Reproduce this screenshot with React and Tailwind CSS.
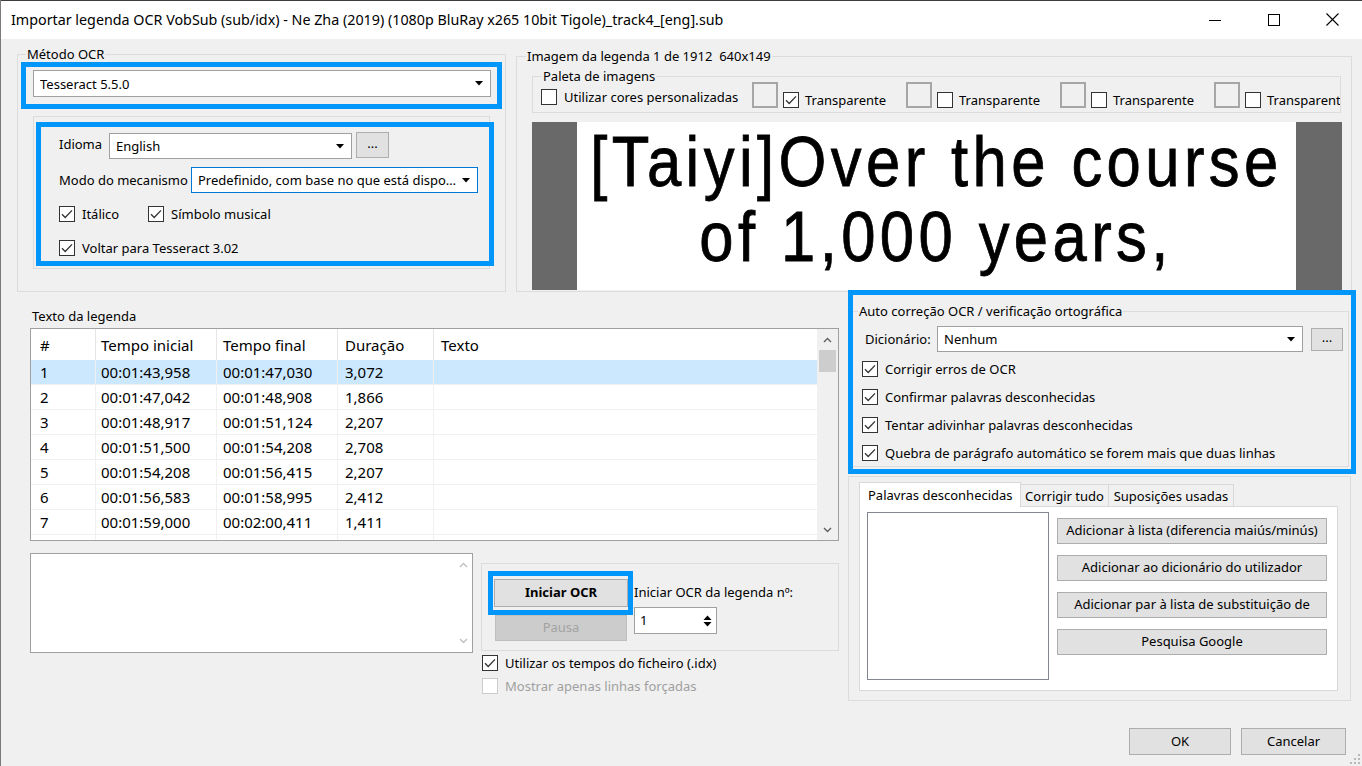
import React from "react";

const UI = "font-['Noto_Sans',sans-serif]";

function Check({ checked, disabled }) {
  return (
    <span
      className={`w-[16px] h-[16px] shrink-0 bg-white border flex items-center justify-center ${
        disabled ? "border-[#cccccc]" : "border-[#333333]"
      }`}
    >
      {checked && (
        <svg width="14" height="14" viewBox="0 0 14 14">
          <path d="M2 7.3 L5.2 10.5 L12 3.4" fill="none" stroke="#333333" strokeWidth="1.3" />
        </svg>
      )}
    </span>
  );
}

function CheckRow({ checked, disabled, label, className = "" }) {
  return (
    <div className={`flex items-center h-[16px] ${className}`}>
      <Check checked={checked} disabled={disabled} />
      <span className={`ml-[7px] text-[13px] leading-[16px] whitespace-nowrap ${disabled ? "text-[#a0a0a0]" : ""}`}>
        {label}
      </span>
    </div>
  );
}

function Arrow() {
  return (
    <svg width="8" height="5" viewBox="0 0 8 5" className="shrink-0">
      <path d="M0 0H8L4 4.5Z" fill="#000" />
    </svg>
  );
}

function Combo({ text, className = "", focus }) {
  return (
    <div
      className={`bg-white border flex items-center pl-[6px] pr-[7px] shrink-0 ${
        focus ? "border-[#0078d7]" : "border-[#a0a0a0]"
      } ${className}`}
    >
      <span className="flex-1 whitespace-nowrap overflow-hidden text-[13px] leading-[16px]">{text}</span>
      <Arrow />
    </div>
  );
}

function DotsBtn({ className = "" }) {
  return (
    <div
      className={`bg-[#e1e1e1] border border-[#adadad] flex items-center justify-center text-[13px] leading-[10px] pb-[4px] shrink-0 ${className}`}
    >
      ...
    </div>
  );
}

function Btn({ children, className = "" }) {
  return (
    <div
      className={`bg-[#e1e1e1] border border-[#adadad] flex items-center justify-center text-[13px] whitespace-nowrap shrink-0 ${className}`}
    >
      {children}
    </div>
  );
}

function Group({ label, className = "", labelLeft = "left-[8px]", children }) {
  return (
    <div className={`relative border border-[#dcdcdc] shrink-0 ${className}`}>
      {label && (
        <span
          className={`absolute top-[-9px] px-[1px] bg-[#f0f0f0] text-[13px] leading-[16px] whitespace-pre ${labelLeft}`}
        >
          {label}
        </span>
      )}
      {children}
    </div>
  );
}

function Chevron({ up, color = "#606060" }) {
  return (
    <svg width="9" height="6" viewBox="0 0 9 6">
      <path d={up ? "M1 5 L4.5 1.5 L8 5" : "M1 1 L4.5 4.5 L8 1"} fill="none" stroke={color} strokeWidth="1.4" />
    </svg>
  );
}

const rows = [
  ["1", "00:01:43,958", "00:01:47,030", "3,072"],
  ["2", "00:01:47,042", "00:01:48,908", "1,866"],
  ["3", "00:01:48,917", "00:01:51,124", "2,207"],
  ["4", "00:01:51,500", "00:01:54,208", "2,708"],
  ["5", "00:01:54,208", "00:01:56,415", "2,207"],
  ["6", "00:01:56,583", "00:01:58,995", "2,412"],
  ["7", "00:01:59,000", "00:02:00,411", "1,411"],
  ["", "", "", ""],
];

function ListView() {
  return (
    <div className="ml-[30px] mt-[4px] w-[809px] h-[213px] border border-[#a0a0a0] bg-white flex overflow-hidden shrink-0">
      <div className="flex-1 flex flex-col overflow-hidden">
        <div className="h-[31px] flex shrink-0 text-[15px] leading-[18px]">
          <div className="w-[65px] border-r border-[#e5e5e5] flex items-center pl-[9px]">#</div>
          <div className="w-[121px] border-r border-[#e5e5e5] flex items-center pl-[5px]">Tempo inicial</div>
          <div className="w-[121px] border-r border-[#e5e5e5] flex items-center pl-[6px]">Tempo final</div>
          <div className="w-[96px] border-r border-[#e5e5e5] flex items-center pl-[7px]">Duração</div>
          <div className="flex-1 flex items-center pl-[7px]">Texto</div>
        </div>
        {rows.map((r, i) => (
          <div
            key={i}
            className={`h-[25px] flex shrink-0 border-b border-[#f0f0f0] text-[15px] leading-[18px] ${
              i === 0 ? "bg-[#cce8ff]" : ""
            }`}
          >
            <div className="w-[65px] border-r border-[#f0f0f0] flex items-center pl-[9px]">{r[0]}</div>
            <div className="w-[121px] border-r border-[#f0f0f0] flex items-center pl-[5px]">{r[1]}</div>
            <div className="w-[121px] border-r border-[#f0f0f0] flex items-center pl-[6px]">{r[2]}</div>
            <div className="w-[96px] border-r border-[#f0f0f0] flex items-center pl-[7px]">{r[3]}</div>
            <div className="flex-1"></div>
          </div>
        ))}
      </div>
      <div className="w-[21px] bg-[#f0f0f0] flex flex-col shrink-0">
        <div className="h-[21px] flex items-center justify-center">
          <Chevron up />
        </div>
        <div className="mx-[2px] h-[22px] bg-[#cdcdcd]"></div>
        <div className="flex-1"></div>
        <div className="h-[21px] flex items-center justify-center">
          <Chevron />
        </div>
      </div>
    </div>
  );
}

function PaletteUnit({ checked, label = "Transparente" }) {
  return (
    <div className="w-[154px] shrink-0 flex items-start">
      <div className="mt-[5px] w-[26px] h-[26px] border-2 border-[#a6a6a6] shrink-0"></div>
      <div className="ml-[5px] mt-[15px] flex items-center">
        <Check checked={checked} />
        <span className="ml-[6px] text-[13px] leading-[16px] whitespace-nowrap">{label}</span>
      </div>
    </div>
  );
}

export default function App() {
  return (
    <div className={`relative w-[1362px] h-[766px] bg-[#f0f0f0] overflow-hidden text-black ${UI}`}>
      {/* Title bar */}
      <div className="h-[39px] bg-white flex items-center shrink-0">
        <span className="ml-[11px] text-[14.3px] leading-[18px] whitespace-nowrap">
          Importar legenda OCR VobSub (sub/idx) - Ne Zha (2019) (1080p BluRay x265 10bit Tigole)_track4_[eng].sub
        </span>
        <div className="ml-auto flex h-full">
          <div className="w-[59px] h-full flex items-center justify-center">
            <svg width="12" height="12" viewBox="0 0 12 12">
              <path d="M0 6.5H12" stroke="#000" strokeWidth="1" />
            </svg>
          </div>
          <div className="w-[59px] h-full flex items-center justify-center">
            <svg width="12" height="12" viewBox="0 0 12 12">
              <rect x="0.5" y="0.5" width="11" height="11" fill="none" stroke="#000" strokeWidth="1" />
            </svg>
          </div>
          <div className="w-[59px] h-full flex items-center justify-center">
            <svg width="13" height="13" viewBox="0 0 13 13">
              <path d="M0.5 0.5L12.5 12.5M12.5 0.5L0.5 12.5" stroke="#000" strokeWidth="1.1" />
            </svg>
          </div>
        </div>
      </div>

      {/* Row 1 */}
      <div className="flex h-[253px]">
        <Group label="Método OCR" className="ml-[17px] mt-[15px] w-[489px] h-[238px] flex flex-col">
          <Combo text="Tesseract 5.5.0" className="ml-[15px] mt-[15px] w-[458px] h-[27px]" />
          <Group className="ml-[15px] mt-[19px] w-[457px] h-[153px] flex flex-col">
            <div className="flex items-center mt-[15px] h-[26px]">
              <span className="ml-[25px] w-[50px] text-[13px] leading-[16px] -mt-[2px]">Idioma</span>
              <Combo text="English" className="w-[243px] h-[26px] mt-[2px]" />
              <DotsBtn className="ml-[4px] w-[33px] h-[26px]" />
            </div>
            <div className="flex items-center mt-[9px] h-[26px]">
              <span className="ml-[25px] w-[132px] text-[13px] leading-[16px] whitespace-nowrap">Modo do mecanismo</span>
              <Combo focus text="Predefinido, com base no que está dispo…" className="w-[287px] h-[26px]" />
            </div>
            <div className="flex items-center mt-[13px]">
              <div className="ml-[25px] w-[89px]">
                <CheckRow checked label="Itálico" />
              </div>
              <CheckRow checked label="Símbolo musical" />
            </div>
            <CheckRow checked label="Voltar para Tesseract 3.02" className="ml-[25px] mt-[18px]" />
          </Group>
        </Group>

        <Group
          label="Imagem da legenda 1 de 1912  640x149"
          labelLeft="left-[9px]"
          className="ml-[10px] mt-[17px] w-[836px] h-[236px] flex flex-col"
        >
          <Group label="Paleta de imagens" labelLeft="left-[9px]" className="ml-[15px] mt-[19px] w-[809px] h-[37px]">
            <div className="flex h-full overflow-hidden">
              <div className="w-[219px] shrink-0 flex items-start">
                <div className="ml-[8px] mt-[12px]">
                  <CheckRow label="Utilizar cores personalizadas" />
                </div>
              </div>
              <PaletteUnit checked />
              <PaletteUnit />
              <PaletteUnit />
              <PaletteUnit label="Transparent" />
            </div>
          </Group>
          <div className="ml-[15px] mt-[9px] w-[810px] h-[168px] flex shrink-0">
            <div className="w-[45px] bg-[#696969]"></div>
            <div className="flex-1 bg-white flex flex-col items-center pt-[3px] overflow-hidden font-['Liberation_Sans',Arial,sans-serif] text-[70px] leading-[75px] tracking-[5px] whitespace-nowrap [-webkit-text-stroke:0.8px_#000]">
              <span className="scale-x-[0.88]">[Taiyi]Over the course</span>
              <span className="scale-x-[0.88]">of 1,000 years,</span>
            </div>
            <div className="w-[46px] bg-[#696969]"></div>
          </div>
        </Group>
      </div>

      {/* Row 2 */}
      <div className="flex h-[436px]">
        <div className="w-[848px] flex flex-col shrink-0">
          <span className="ml-[32px] mt-[16px] text-[13px] leading-[16px]">Texto da legenda</span>
          <ListView />
          <div className="flex mt-[12px]">
            <div className="ml-[30px] w-[443px] h-[100px] border border-[#a0a0a0] bg-white flex justify-end shrink-0">
              <div className="w-[18px] flex flex-col items-center justify-between py-[8px]">
                <Chevron up color="#c0c0c0" />
                <Chevron color="#c0c0c0" />
              </div>
            </div>
            <div className="ml-[8px] flex flex-col">
              <Group className="mt-[10px] w-[358px] h-[88px] flex">
                <div className="ml-[12px] flex flex-col">
                  <Btn className="mt-[15px] w-[134px] h-[28px] font-bold">Iniciar OCR</Btn>
                  <div className="mt-[8px] ml-[1px] w-[132px] h-[26px] bg-[#cccccc] border border-[#bfbfbf] flex items-center justify-center text-[13px] text-[#a3a3a3]">
                    Pausa
                  </div>
                </div>
                <div className="ml-[6px] flex flex-col">
                  <span className="mt-[20px] text-[13px] leading-[16px] whitespace-nowrap">Iniciar OCR da legenda nº:</span>
                  <div className="mt-[7px] w-[83px] h-[27px] bg-white border border-[#a0a0a0] flex items-center pl-[5px] pr-[4px]">
                    <span className="flex-1 text-[13px]">1</span>
                    <svg width="9" height="14" viewBox="0 0 9 14">
                      <path d="M0.5 6H8.5L4.5 1.5Z" fill="#000" />
                      <path d="M0.5 8H8.5L4.5 12.5Z" fill="#000" />
                    </svg>
                  </div>
                </div>
              </Group>
              <CheckRow checked label="Utilizar os tempos do ficheiro (.idx)" className="mt-[4px] ml-[1px]" />
              <CheckRow disabled label="Mostrar apenas linhas forçadas" className="mt-[7px] ml-[1px]" />
            </div>
          </div>
        </div>

        <div className="w-[514px] flex flex-col shrink-0">
          <Group
            label="Auto correção OCR / verificação ortográfica"
            labelLeft="left-[7px]"
            className="ml-[2px] mt-[19px] w-[499px] h-[156px] flex flex-col"
          >
            <div className="flex items-center mt-[14px] h-[26px]">
              <span className="ml-[14px] w-[72px] text-[13px] leading-[16px]">Dicionário:</span>
              <Combo text="Nenhum" className="w-[366px] h-[26px]" />
              <DotsBtn className="ml-[8px] w-[32px] h-[23px]" />
            </div>
            <CheckRow checked label="Corrigir erros de OCR" className="ml-[11px] mt-[9px]" />
            <CheckRow checked label="Confirmar palavras desconhecidas" className="ml-[11px] mt-[12px]" />
            <CheckRow checked label="Tentar adivinhar palavras desconhecidas" className="ml-[11px] mt-[12px]" />
            <CheckRow
              checked
              label="Quebra de parágrafo automático se forem mais que duas linhas"
              className="ml-[11px] mt-[12px]"
            />
          </Group>

          <div className="mt-[9px] w-[503px] h-[225px] border border-[#dcdcdc] flex flex-col shrink-0">
            <div className="relative z-10 flex items-end ml-[10px] mt-[5px] h-[25px] -mb-px">
              <div className="w-[162px] h-[25px] bg-white border border-b-0 border-[#d9d9d9] flex items-center pl-[8px] text-[13px] leading-[16px] whitespace-nowrap">
                Palavras desconhecidas
              </div>
              <div className="w-[88px] h-[23px] bg-[#f0f0f0] border border-l-0 border-[#d9d9d9] flex items-center justify-center text-[13px] leading-[16px] whitespace-nowrap">
                Corrigir tudo
              </div>
              <div className="w-[125px] h-[23px] bg-[#f0f0f0] border border-l-0 border-[#d9d9d9] flex items-center justify-center text-[13px] leading-[16px] whitespace-nowrap">
                Suposições usadas
              </div>
            </div>
            <div className="ml-[10px] w-[479px] h-[185px] bg-white border border-[#d9d9d9] flex shrink-0">
              <div className="ml-[7px] mt-[5px] w-[182px] h-[168px] border border-[#828790] bg-white shrink-0"></div>
              <div className="ml-[8px] mt-[11px] flex flex-col gap-[11px]">
                <Btn className="w-[270px] h-[26px] text-[12.5px]">Adicionar à lista (diferencia maiús/minús)</Btn>
                <Btn className="w-[270px] h-[26px] text-[12.5px]">Adicionar ao dicionário do utilizador</Btn>
                <Btn className="w-[270px] h-[26px] text-[12.5px]">Adicionar par à lista de substituição de</Btn>
                <Btn className="w-[270px] h-[26px] text-[12.5px]">Pesquisa Google</Btn>
              </div>
            </div>
          </div>
        </div>
      </div>

      {/* Row 3 */}
      <div className="flex justify-end">
        <Btn className="w-[102px] h-[27px]">OK</Btn>
        <Btn className="ml-[10px] mr-[16px] w-[105px] h-[27px]">Cancelar</Btn>
      </div>

      {/* window border lines */}
      <div className="absolute left-0 top-0 w-full h-px bg-[#3c3c3c]"></div>
      <div className="absolute left-0 top-0 w-px h-full bg-[#7a7a7a]"></div>

      {/* resize grip */}
      <svg className="absolute right-[2px] bottom-[2px]" width="10" height="10" viewBox="0 0 10 10">
        <rect x="8" y="0" width="2" height="2" fill="#b8b8b8" />
        <rect x="4" y="4" width="2" height="2" fill="#b8b8b8" />
        <rect x="8" y="4" width="2" height="2" fill="#b8b8b8" />
        <rect x="0" y="8" width="2" height="2" fill="#b8b8b8" />
        <rect x="4" y="8" width="2" height="2" fill="#b8b8b8" />
        <rect x="8" y="8" width="2" height="2" fill="#b8b8b8" />
      </svg>

      {/* Annotation highlight boxes */}
      <div className="absolute left-[21px] top-[62px] w-[481px] h-[47px] border-[5px] border-[#0096fa] pointer-events-none"></div>
      <div className="absolute left-[36px] top-[122px] w-[458px] h-[144px] border-[5px] border-[#0096fa] pointer-events-none"></div>
      <div className="absolute left-[848px] top-[290px] w-[508px] h-[184px] border-[5px] border-[#0096fa] pointer-events-none"></div>
      <div className="absolute left-[488px] top-[571px] w-[145px] h-[44px] border-[5px] border-[#0096fa] pointer-events-none"></div>
    </div>
  );
}
